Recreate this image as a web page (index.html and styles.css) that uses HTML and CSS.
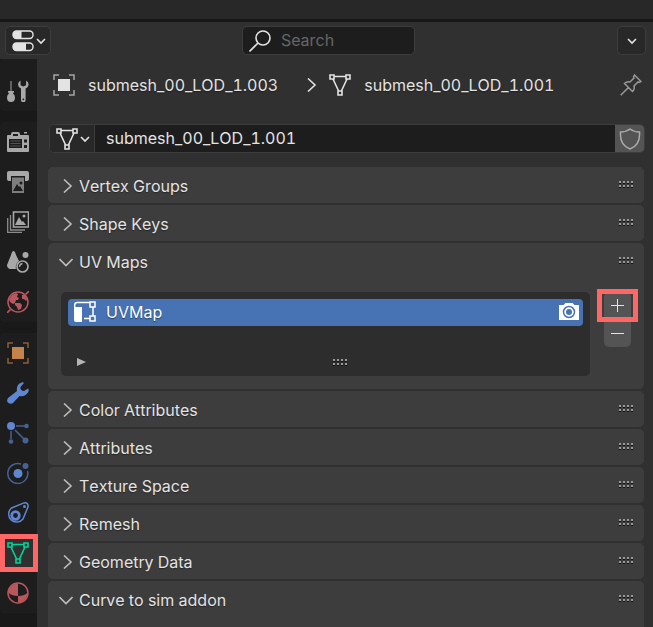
FILE: index.html
```html
<!DOCTYPE html>
<html lang="en">
<head>
<meta charset="utf-8">
<title>Properties</title>
<link rel="stylesheet" href="styles.css">
</head>
<body>
<svg class="defs" aria-hidden="true">
  <symbol id="mesh" viewBox="0 0 22 22"><g fill="none" stroke="currentColor" stroke-width="1.600"><path d="M1 1h4v4H1zM17 1h4v4h-4zM9 17h4v4H9zM5 2.500h12M4 5l5.600 12M18 5l-5.600 12"/></g></symbol>
  <symbol id="down" viewBox="0 0 10 10"><path d="M1 3l4 4 4-4" fill="none" stroke="currentColor" stroke-width="1.600"/></symbol>
  <symbol id="right" viewBox="0 0 14 14"><path d="M5 .5L12 7l-7 6.500" fill="none" stroke="currentColor" stroke-width="1.600"/></symbol>
  <symbol id="open" viewBox="0 0 14 14"><path d="M.5 4L7 10.500 13.500 4" fill="none" stroke="currentColor" stroke-width="1.600"/></symbol>
  <symbol id="grip" viewBox="0 0 16 8"><path d="M1 2h2v1H1zM5 2h2v1H5zM9 2h2v1H9zM13 2h2v1h-2zM1 6h2v1H1zM5 6h2v1H5zM9 6h2v1H9zM13 6h2v1h-2z" fill="#111"/><path d="M1 0h2v2H1zM5 0h2v2H5zM9 0h2v2H9zM13 0h2v2h-2zM1 4h2v2H1zM5 4h2v2H5zM9 4h2v2H9zM13 4h2v2h-2z" fill="#999"/></symbol>
  <symbol id="object" viewBox="0 0 22 22"><path d="M5 5h12v12H5z" fill="currentColor"/><path d="M1 6V1h5M16 1h5v5M21 16v5h-5M6 21H1v-5" fill="none" stroke="currentColor" stroke-width="1.500" opacity=".65"/></symbol>
</svg>

<div class="topstrip"></div>
<header class="header">
  <button class="box editor" aria-label="Editor type">
    <svg class="icon" viewBox="0 0 22 22"><g fill="none" stroke="currentColor" stroke-width="1.400"><rect x="1" y="1" width="20" height="7.500" rx="3.500"/><rect x="1" y="13" width="20" height="7.500" rx="3.500"/></g><path d="M4 1h5.500v7.500H4a3 3 0 0 1-3-3V4a3 3 0 0 1 3-3zM4 13h10v7.500H4a3 3 0 0 1-3-3V16a3 3 0 0 1 3-3z" fill="currentColor"/></svg>
    <svg class="caret"><use href="#down"/></svg>
  </button>
  <label class="box search">
    <svg class="icon" viewBox="0 0 22 22"><g fill="none" stroke="currentColor" stroke-width="1.600"><circle cx="14" cy="8" r="7"/><path d="M9 13l-8.500 8.500"/></g></svg>
    <input type="text" placeholder="Search" aria-label="Search">
  </label>
  <button class="box options" aria-label="Options"><svg class="caret"><use href="#down"/></svg></button>
</header>

<div class="editor-body">
  <nav class="tabs" aria-label="Property tabs">
    <div class="group first">
      <button class="tab" aria-label="Tool"><svg class="icon" viewBox="0 0 22 22"><path d="M3.500 1h1v10h-1zM1 11h6v1L6 13.500q2 1.500 2 4Q8 22 4 22t-4-4.500q0-2.500 2-4L1 12z" fill="currentColor"/><path d="M13.500 .5Q11 2 11 4.500q0 2.500 3 4V20a2.300 2.300 0 0 0 4.600 0V8.500q3-1.500 3-4 0-2.500-2.500-4v4.800L16.300 6.500 13.500 5.300z" fill="currentColor"/><circle cx="16.300" cy="19.300" r=".9" fill="#1d1d1d"/></svg></button>
    </div>
    <div class="group">
      <button class="tab" aria-label="Render"><svg class="icon" viewBox="0 0 22 22"><path d="M1 4h3V3q0-2 2-2h5q2 0 2 2v1h8q1 0 1 1v15q0 1-1 1H1q-1 0-1-1V5q0-1 1-1zM17 1h3v1.500h-3z" fill="currentColor"/><path d="M6 3h5v2H6zM2 8h13v9H2zM17 8.500h3v3h-3zM17 14h3v3h-3z" fill="#1d1d1d"/><path d="M3.500 10h10M3.500 12.500h10M3.500 15h10" stroke="currentColor" opacity=".4"/></svg></button>
      <button class="tab" aria-label="Output"><svg class="icon" viewBox="0 0 22 22"><path d="M2 0h18q2 0 2 2v6q0 2-2 2h-2V5H4v5H2Q0 10 0 8V2Q0 0 2 0z" fill="currentColor"/><path d="M5 6.500h12V22H5z" fill="currentColor" opacity=".7"/><path d="M6 20l4-7 2 3 1-1 3 5z" fill="#1d1d1d"/><circle cx="14" cy="12" r="1.500" fill="#1d1d1d"/></svg></button>
      <button class="tab" aria-label="View Layer"><svg class="icon" viewBox="0 0 22 22"><path d="M6.500 1h15v15h-15z" fill="none" stroke="currentColor" stroke-width="1.600"/><path d="M8 14l4-8 3 5 1-1 3 4z" fill="currentColor"/><circle cx="17" cy="5" r="1.500" fill="currentColor"/><path d="M3.500 4v15H18M.7 7v14.500H15" fill="none" stroke="currentColor" stroke-width="1.300" opacity=".8"/></svg></button>
      <button class="tab" aria-label="Scene"><svg class="icon" viewBox="0 0 22 22"><path d="M6.500 0Q8 0 9 4l3 6q-4 3-3 8H3q-3-1-3-4l4-10Q5 0 6.500 0z" fill="currentColor"/><circle cx="18.500" cy="4" r="3" fill="currentColor"/><circle cx="15.500" cy="15.500" r="5.500" fill="none" stroke="currentColor" stroke-width="1.700"/><path d="M12.500 16q0-3 3-3.500" fill="none" stroke="currentColor" stroke-width="1.300"/></svg></button>
      <button class="tab world" aria-label="World"><svg class="icon" viewBox="0 0 22 22"><circle cx="11" cy="11" r="10" fill="none" stroke="currentColor" stroke-width="1.500"/><path d="M0 22l3.500-3.500M18.500 3.500L22 0" stroke="currentColor" stroke-width="1.600"/><path d="M2 8l3-4 4-2 2 1-1 3 2 1-1 2-2 0-1 3-2 1-3-2zM8 12l5 0 2 2-1 4-3 1-1-3-2-2zM15 4l3 0 2 4-1 2-2-2-2 0z" fill="currentColor"/></svg></button>
    </div>
    <div class="group">
      <button class="tab object" aria-label="Object"><svg class="icon"><use href="#object"/></svg></button>
      <button class="tab blue" aria-label="Modifiers"><svg class="icon" viewBox="0 0 22 22"><path d="M1 16L10 9Q9 3 14 .7q2-.8 3 .3l-3.500 4q-.5 4 3.500 4l4-2.500q1.500 1.500 0 4-3 4.500-8.500 3.500L6 21q-2 1.500-4.500 0T1 16z" fill="currentColor"/></svg></button>
      <button class="tab blue" aria-label="Particles"><svg class="icon" viewBox="0 0 22 22"><circle cx="4" cy="4" r="4" fill="currentColor"/><g opacity=".65"><path d="M9 4h9M4 9v8M8 8l9 9" stroke="currentColor" stroke-width="1.500"/><circle cx="19.500" cy="4" r="2.300" fill="currentColor"/><circle cx="4" cy="19.500" r="2.300" fill="currentColor"/><circle cx="18.500" cy="18.500" r="3" fill="currentColor"/></g></svg></button>
      <button class="tab blue" aria-label="Physics"><svg class="icon" viewBox="0 0 22 22"><circle cx="11" cy="11.500" r="4.500" fill="currentColor"/><g opacity=".65"><path d="M14 2A10 10 0 1 0 20.500 9" fill="none" stroke="currentColor" stroke-width="1.500"/><circle cx="18.500" cy="4" r="3" fill="currentColor"/></g></svg></button>
      <button class="tab blue" aria-label="Constraints"><svg class="icon" viewBox="0 0 22 22"><path d="M4.500 6L17 .9q4-.9 4.200 3.500L16 17A8 8 0 1 1 4.500 6z" fill="none" stroke="currentColor" stroke-width="1.500"/><circle cx="8.500" cy="13.500" r="3.800" fill="none" stroke="currentColor" stroke-width="2.800"/><circle cx="17.500" cy="4.500" r="1.500" fill="currentColor"/></svg></button>
      <button class="tab data" aria-label="Data" aria-current="page"><svg class="icon"><use href="#mesh"/></svg></button>
      <button class="tab world" aria-label="Material"><svg class="icon" viewBox="0 0 22 22"><circle cx="11" cy="11" r="10" fill="none" stroke="currentColor" stroke-width="1.500"/><path d="M11 14Q5 14 1.500 11A9.500 9.500 0 0 1 11 1.500zM11 14q6 0 9.500-3A9.500 9.500 0 0 1 11 20.500z" fill="currentColor"/></svg></button>
    </div>
  </nav>

  <main class="content">
    <div class="crumbs">
      <svg class="icon"><use href="#object"/></svg>
      <span class="crumb">submesh_00_LOD_1.003</span>
      <svg class="arrow next"><use href="#right"/></svg>
      <svg class="icon"><use href="#mesh"/></svg>
      <span class="crumb">submesh_00_LOD_1.001</span>
      <button class="pin" aria-label="Pin"><svg class="icon" viewBox="0 0 22 22"><path d="M14.500 1l6.500 6.500-2 1-1-.5-4 4q1 3-1.500 5.500L4.500 9.500Q7 7 10 8l4-4-.5-1zM8.500 13.500L.7 21.300" fill="none" stroke="currentColor" stroke-width="1.500"/></svg></button>
    </div>

    <div class="idblock">
      <button class="pick" aria-label="Browse mesh data"><svg class="icon"><use href="#mesh"/></svg><svg class="caret"><use href="#down"/></svg></button>
      <input type="text" value="submesh_00_LOD_1.001" aria-label="Mesh name">
      <button class="shield" aria-label="Fake user"><svg class="icon" viewBox="0 0 22 22"><path d="M11 1q4 3 9.500 3Q21.500 17 11 21 .5 17 1.500 4 7 4 11 1z" fill="none" stroke="currentColor" stroke-width="1.500"/></svg></button>
    </div>

    <div class="panels">
      <section class="panel"><button class="head"><svg class="arrow"><use href="#right"/></svg>Vertex Groups<svg class="grip"><use href="#grip"/></svg></button></section>
      <section class="panel"><button class="head"><svg class="arrow"><use href="#right"/></svg>Shape Keys<svg class="grip"><use href="#grip"/></svg></button></section>
      <section class="panel">
        <button class="head" aria-expanded="true"><svg class="arrow"><use href="#open"/></svg>UV Maps<svg class="grip"><use href="#grip"/></svg></button>
        <div class="uv">
          <div class="list">
            <div class="item">
              <svg class="icon" viewBox="0 0 22 22"><path d="M0 6h8v15H2q-2 0-2-2z" fill="currentColor"/><path d="M.7 7V4q0-2.500 2.500-2.500H16M19 6v9M10 17.500h6M16 1h5v5h-5zM16 15h5v5h-5z" fill="none" stroke="currentColor" stroke-width="1.500"/></svg>
              <span class="item-name">UVMap</span>
              <button class="camera" aria-label="Active render"><svg class="icon" viewBox="0 0 22 22"><path d="M1 4h4.500l2-2h7l2 2H21v15H1z" fill="currentColor"/><circle cx="11" cy="11" r="5.500" fill="none" stroke="#4772b3" stroke-width="1.500"/><circle cx="11" cy="11" r="3" fill="#4772b3"/></svg></button>
            </div>
            <div class="list-foot">
              <button class="filter" aria-label="Show filter"><svg class="tri" viewBox="0 0 10 10"><path d="M1 1l9 4-9 4z" fill="currentColor"/></svg></button>
              <svg class="grip"><use href="#grip"/></svg>
            </div>
          </div>
          <div class="ops">
            <button class="op add" aria-label="Add UV map"><svg viewBox="0 0 15 15"><path d="M7.500 1v13M1 7.500h13" stroke="currentColor"/></svg></button>
            <button class="op" aria-label="Remove UV map"><svg viewBox="0 0 15 15"><path d="M1 7.500h13" stroke="currentColor"/></svg></button>
          </div>
        </div>
      </section>
      <section class="panel"><button class="head"><svg class="arrow"><use href="#right"/></svg>Color Attributes<svg class="grip"><use href="#grip"/></svg></button></section>
      <section class="panel"><button class="head"><svg class="arrow"><use href="#right"/></svg>Attributes<svg class="grip"><use href="#grip"/></svg></button></section>
      <section class="panel"><button class="head"><svg class="arrow"><use href="#right"/></svg>Texture Space<svg class="grip"><use href="#grip"/></svg></button></section>
      <section class="panel"><button class="head"><svg class="arrow"><use href="#right"/></svg>Remesh<svg class="grip"><use href="#grip"/></svg></button></section>
      <section class="panel"><button class="head"><svg class="arrow"><use href="#right"/></svg>Geometry Data<svg class="grip"><use href="#grip"/></svg></button></section>
      <section class="panel last"><button class="head" aria-expanded="true"><svg class="arrow"><use href="#open"/></svg>Curve to sim addon<svg class="grip"><use href="#grip"/></svg></button></section>
    </div>
  </main>
</div>
</body>
</html>
```
FILE: styles.css
```css
* { box-sizing: border-box; }

body {
  margin: 0;
  height: 100vh;
  overflow: hidden;
  display: flex;
  flex-direction: column;
  background: #303030;
  color: #e3e3e3;
  font: 16px/20px Inter, sans-serif;
  font-kerning: none;
  font-feature-settings: "tnum", "calt" 0;
}

button, input {
  margin: 0;
  padding: 0;
  border: 0;
  background: none;
  color: inherit;
  font: inherit;
  font-kerning: inherit;
  font-feature-settings: inherit;
}

svg { display: block; flex: none; }
.defs { position: absolute; width: 0; height: 0; }
.icon { width: 22px; height: 22px; }
.caret { width: 10px; height: 10px; }
.arrow { width: 14px; height: 14px; color: #bdbdbd; }
.grip { width: 16px; height: 8px; }

.topstrip {
  flex: none;
  height: 22px;
  background: #282828;
  border-bottom: 3px solid #181818;
}

.header {
  flex: none;
  display: grid;
  grid-template-columns: 1fr auto 1fr;
  align-items: center;
  height: 37px;
  padding: 0 7px 0 5px;
}

.box {
  display: flex;
  align-items: center;
  height: 29px;
  border: 1px solid #3d3d3d;
  border-radius: 5px;
  background: #282828;
}

.editor { justify-self: start; gap: 2px; padding: 0 4px 0 6px; }
.search { width: 173px; margin-left: 6px; gap: 10px; padding: 0 6px; background: #1d1d1d; }
.search input { flex: 1; min-width: 0; padding-bottom: 2px; outline: 0; }
.search input::placeholder { color: #666; opacity: 1; }
.options { justify-self: end; width: 29px; justify-content: center; }

.editor-body { flex: 1; min-height: 0; display: flex; }

.tabs {
  flex: none;
  width: 37px;
  display: flex;
  flex-direction: column;
  gap: 11px;
  background: #191919;
  color: #a8a8a8;
}

.group { background: #1d1d1d; border-radius: 4px 0 0 4px; }
.first { padding-top: 12px; }
.tab {
  display: flex;
  align-items: center;
  width: 100%;
  height: 40px;
  padding-left: 7px;
}
.world { color: #b9575f; }
.object { color: #c5824b; }
.blue { color: #5f86d3; }
.data {
  width: 38px;
  height: 38px;
  margin: 1px 0;
  padding-left: 2px;
  border: 5px solid #ff6666;
  background: #303030;
  color: #00d69a;
}

.content { flex: 1; min-width: 0; padding: 0 8px 0 11px; }

.crumbs {
  display: flex;
  align-items: center;
  height: 52px;
  padding-left: 5px;
}
.crumb { margin-left: 13px; text-shadow: 0 1px 1px #1118; }
.next { margin: 0 12px 0 25px; color: #dedede; }
.pin { margin: 0 3px 0 auto; color: #999; }

.idblock {
  display: flex;
  height: 29px;
  margin: 13px 0 14px 1px;
  border: 1px solid #3d3d3d;
  border-radius: 5px;
  overflow: hidden;
  background: #1d1d1d;
}
.pick {
  display: flex;
  align-items: center;
  gap: 2px;
  padding: 0 4px 0 6px;
  border-right: 1px solid #3d3d3d;
  background: #282828;
}
.idblock input { flex: 1; min-width: 0; padding: 0 11px 2px; outline: 0; }
.shield {
  display: flex;
  align-items: center;
  justify-content: center;
  width: 29px;
  background: #545454;
  color: #aaa;
}

.panels { display: flex; flex-direction: column; gap: 2px; margin-right: 1px; }
.panel { border-radius: 5px; background: #3d3d3d; }
.last { height: 60px; }
.head {
  display: flex;
  align-items: center;
  gap: 6px;
  width: 100%;
  height: 36px;
  padding: 2px 10px 0 11px;
  text-align: left;
  text-shadow: 0 1px 1px #1118;
}
.head .grip { margin: 0 0 2px auto; }

.uv { display: flex; gap: 14px; padding: 13px; }
.list {
  flex: 1;
  min-width: 0;
  height: 84px;
  padding: 7px;
  border-radius: 5px;
  background: #2d2d2d;
}
.item {
  display: flex;
  align-items: center;
  height: 27px;
  padding: 0 3px 1px 6px;
  border-radius: 4px;
  background: #4772b3;
  color: #fff;
}
.item-name { flex: 1; margin-left: 10px; text-shadow: 0 1px 1px #1118; }
.list-foot {
  display: grid;
  grid-template-columns: 1fr auto 1fr;
  align-items: center;
  margin-top: 31px;
  padding-left: 8px;
}
.list-foot .grip { margin: 2px 0 0 20px; }
.filter { justify-self: start; color: #b5b5b5; }
.tri { width: 10px; height: 10px; }

.ops { display: flex; flex-direction: column; gap: 1px; width: 27px; }
.op {
  display: flex;
  align-items: center;
  justify-content: center;
  height: 27px;
  border-radius: 0 0 5px 5px;
  background: #545454;
}
.op svg { width: 15px; height: 15px; }
.add { position: relative; border-radius: 5px 5px 0 0; }
.add::after {
  content: "";
  position: absolute;
  inset: -3px -7px;
  border: 5px solid #ff6666;
}
```
